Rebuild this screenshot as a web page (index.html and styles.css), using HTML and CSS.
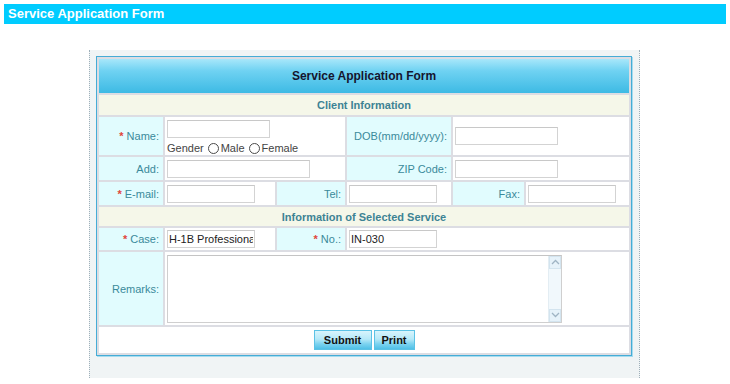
FILE: index.html
```html
<!DOCTYPE html>
<html lang="en">

<head>
    <meta charset="UTF-8" />
    <meta name="viewport" content="width=device-width, initial-scale=1.0" />
    <title>Service Application Form</title>
    <link rel="stylesheet" href="styles.css">
</head>

<body>
    <div class="page-title">Service Application Form</div>

    <div class="panel">
        <form class="app-form">
            <table class="form-table">
                <colgroup>
                    <col class="col-a">
                    <col class="col-b">
                    <col class="col-c">
                    <col class="col-d">
                    <col class="col-e">
                    <col class="col-f">
                </colgroup>
                <tr class="row-title">
                    <th colspan="6">Service Application Form</th>
                </tr>
                <tr class="row-section">
                    <td colspan="6">Client Information</td>
                </tr>
                <tr class="row-name">
                    <td class="label"><span class="req">*</span> Name:</td>
                    <td class="field field-top" colspan="2">
                        <input type="text" class="input input-md" />
                        <div class="gender">
                            Gender
                            <label><input type="radio" name="gender" class="radio" />Male</label>
                            <label><input type="radio" name="gender" class="radio" />Female</label>
                        </div>
                    </td>
                    <td class="label">DOB(mm/dd/yyyy):</td>
                    <td class="field" colspan="2"><input type="text" class="input input-md" /></td>
                </tr>
                <tr class="row-add">
                    <td class="label">Add:</td>
                    <td class="field" colspan="2"><input type="text" class="input input-lg" /></td>
                    <td class="label">ZIP Code:</td>
                    <td class="field" colspan="2"><input type="text" class="input input-md" /></td>
                </tr>
                <tr class="row-mail">
                    <td class="label"><span class="req">*</span> E-mail:</td>
                    <td class="field"><input type="text" class="input input-sm" /></td>
                    <td class="label">Tel:</td>
                    <td class="field"><input type="text" class="input input-sm" /></td>
                    <td class="label">Fax:</td>
                    <td class="field"><input type="text" class="input input-sm" /></td>
                </tr>
                <tr class="row-section row-section-2">
                    <td colspan="6">Information of Selected Service</td>
                </tr>
                <tr class="row-case">
                    <td class="label"><span class="req">*</span> Case:</td>
                    <td class="field"><input type="text" class="input input-sm" value="H-1B Professional Services" /></td>
                    <td class="label"><span class="req">*</span> No.:</td>
                    <td class="field" colspan="3"><input type="text" class="input input-sm" value="IN-030" /></td>
                </tr>
                <tr class="row-remarks">
                    <td class="label">Remarks:</td>
                    <td class="field" colspan="5">
                        <div class="textarea-box">
                            <textarea class="remarks"></textarea>
                            <div class="scrollbar">
                                <span class="scroll-btn">
                                    <svg width="9" height="6" viewBox="0 0 9 6"><path d="M1 5 L4.5 1.5 L8 5" fill="none" stroke="#9fb4c4" stroke-width="1.3" /></svg>
                                </span>
                                <span class="scroll-btn">
                                    <svg width="9" height="6" viewBox="0 0 9 6"><path d="M1 1 L4.5 4.5 L8 1" fill="none" stroke="#9fb4c4" stroke-width="1.3" /></svg>
                                </span>
                            </div>
                        </div>
                    </td>
                </tr>
                <tr class="row-buttons">
                    <td colspan="6">
                        <button type="submit" class="btn btn-submit">Submit</button>
                        <button type="button" class="btn btn-print">Print</button>
                    </td>
                </tr>
            </table>
        </form>
    </div>
</body>

</html>
```

FILE: styles.css
```css
* {
    margin: 0;
    padding: 0;
    box-sizing: border-box;
}

body {
    margin: 4px;
    font-family: "Liberation Sans", Arial, sans-serif;
    font-size: 11px;
    color: #333;
    background: #fff;
}

.page-title {
    height: 20px;
    line-height: 20px;
    padding-left: 4px;
    background: #00ccff;
    color: #fff;
    font-size: 13px;
    font-weight: bold;
    margin-bottom: 26px;
}

.panel {
    width: 551px;
    margin-left: 85px;
    padding: 6px 6px 22px 6px;
    background: #f0f4f5;
    border-left: 1px dotted #9fb0ba;
    border-right: 1px dotted #9fb0ba;
}

.form-table {
    width: 536px;
    table-layout: fixed;
    border-collapse: separate;
    border-spacing: 2px;
    background: #dcdde3;
    border: 1px solid #45acd6;
    box-shadow: 1px 1px 0 #a6dcef;
}

.col-a { width: 64px; }
.col-b { width: 110px; }
.col-c { width: 68px; }
.col-d { width: 104px; }
.col-e { width: 71px; }
.col-f { width: 103px; }

.form-table td,
.form-table th {
    vertical-align: middle;
}

.row-title th {
    height: 34px;
    background: linear-gradient(#a8e7fa 0%, #6fd2f2 35%, #3dbae4 100%);
    color: #15152e;
    font-size: 12px;
    font-weight: bold;
    text-align: center;
}

.row-section td {
    height: 20px;
    background: #f5f7e9;
    color: #3d8394;
    font-weight: bold;
    text-align: center;
}

.row-section-2 td {
    height: 19px;
}

.row-name td { height: 38px; }
.row-add td { height: 23px; }
.row-mail td { height: 23px; }
.row-case td { height: 22px; }
.row-remarks td { height: 73px; }
.row-buttons td { height: 26px; }

.label {
    background: #e1fcfe;
    color: #3a8a9b;
    text-align: right;
    padding-right: 4px;
    white-space: nowrap;
}

.req {
    color: #e0453a;
    font-weight: bold;
}

.field {
    background: #fff;
    padding: 0 2px;
}

.field-top {
    vertical-align: top !important;
    padding-top: 3px;
}

.input {
    display: block;
    height: 18px;
    padding: 0 1px;
    border: 1px solid #d3d3d3;
    border-top-color: #c8c8c8;
    background: #fff;
    font-family: "Liberation Sans", Arial, sans-serif;
    font-size: 11px;
    color: #222;
    outline: none;
}

.input-sm { width: 88px; }
.input-md { width: 103px; }
.input-lg { width: 143px; }

.gender {
    display: flex;
    align-items: center;
    margin-top: 4px;
    color: #444;
    line-height: 13px;
}

.gender label {
    display: flex;
    align-items: center;
}

.radio {
    appearance: none;
    -webkit-appearance: none;
    width: 11px;
    height: 11px;
    margin: 0 2px 0 4px;
    border: 1px solid #4a4a4a;
    border-radius: 50%;
    background: #fff;
}

.textarea-box {
    display: flex;
    width: 395px;
    height: 68px;
    border: 1px solid #cfcfcf;
    border-top-color: #c4c4c4;
    background: #fff;
}

.remarks {
    flex: 1;
    border: none;
    resize: none;
    outline: none;
    font-family: "Liberation Sans", Arial, sans-serif;
    font-size: 11px;
}

.scrollbar {
    width: 13px;
    display: flex;
    flex-direction: column;
    justify-content: space-between;
    background: #f1f8fc;
    border-left: 1px solid #e3edf3;
}

.scroll-btn {
    height: 13px;
    display: flex;
    align-items: center;
    justify-content: center;
    background: #e6f2fa;
    border: 1px solid #d3e4ef;
}

.row-buttons td {
    background: #fff;
    text-align: center;
    font-size: 0;
}

.btn {
    height: 20px;
    border: 1px solid #5cc2e5;
    background: linear-gradient(#d8f4fc 0%, #b6e9f8 45%, #7fd4f0 70%, #4fc0e7 100%);
    color: #111;
    font-family: "Liberation Sans", Arial, sans-serif;
    font-size: 11px;
    font-weight: bold;
    cursor: pointer;
    vertical-align: middle;
}

.btn-submit {
    width: 58px;
    margin-right: 2px;
}

.btn-print {
    width: 41px;
}
```
